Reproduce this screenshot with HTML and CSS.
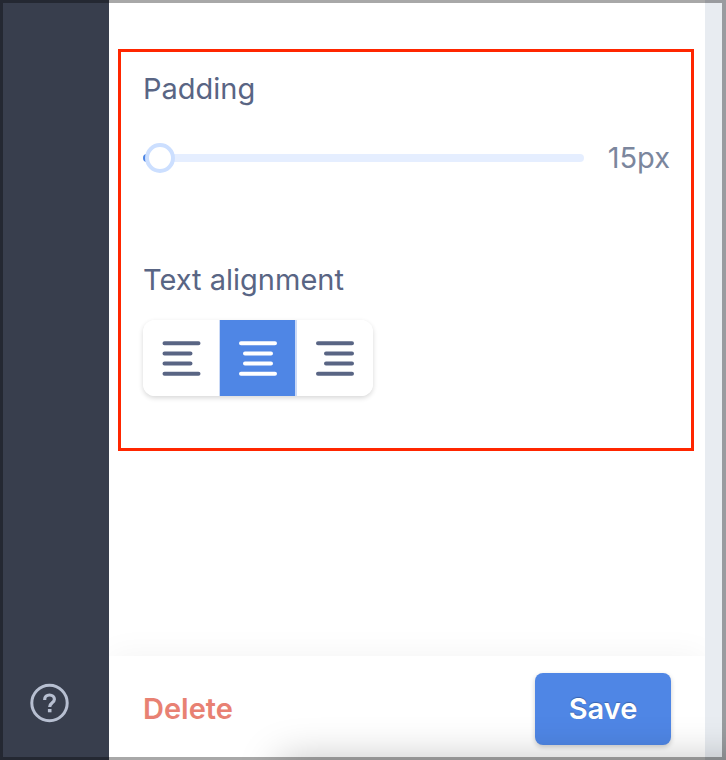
FILE: index.html
```html
<!DOCTYPE html>
<html lang="en">
<head>
<meta charset="utf-8">
<title>Block settings</title>
<link rel="stylesheet" href="styles.css">
</head>
<body>
<div class="app">
  <nav class="sidebar">
    <button class="help" type="button" aria-label="Help">
      <svg width="40" height="40" viewBox="0 0 40 40" fill="none" stroke="currentColor">
        <circle cx="20.500" cy="20" r="17.7" stroke-width="3"/>
        <path d="M15.700 17v-.6c0-2.700 2-4.400 4.800-4.400s4.900 1.700 4.900 4.200c0 1.900-1.100 2.800-2.500 3.900-1.500 1.100-2.200 1.900-2.200 3.900" stroke-width="3.200"/>
        <path d="M18.900 26h3.600v3.300h-3.600z" fill="currentColor" stroke="none"/>
      </svg>
    </button>
  </nav>
  <main class="panel">
    <form class="settings" id="settings">
      <section class="field">
        <label class="label" for="padding">Padding</label>
        <div class="slider-row">
          <input class="slider" id="padding" type="range" min="10" max="1000" value="15">
          <output class="value" for="padding">15px</output>
        </div>
      </section>
      <section class="field">
        <span class="label" id="align-label">Text alignment</span>
        <div class="segmented" role="group" aria-labelledby="align-label">
          <button class="segment" type="button" aria-label="Left" aria-pressed="false">
            <svg width="40" height="40" viewBox="0 0 40 40"><path d="M3.500 5.200h34M3.500 15.400h26M3.500 25.600h26M3.500 35.800h34"/></svg>
          </button>
          <button class="segment active" type="button" aria-label="Center" aria-pressed="true">
            <svg width="40" height="40" viewBox="0 0 40 40"><path d="M3 5.200h34M7 15.400h26M7 25.600h26M3 35.800h34"/></svg>
          </button>
          <button class="segment" type="button" aria-label="Right" aria-pressed="false">
            <svg width="40" height="40" viewBox="0 0 40 40"><path d="M3 5.200h34M11 15.400h26M11 25.600h26M3 35.800h34"/></svg>
          </button>
        </div>
      </section>
    </form>
    <footer class="actions">
      <button class="delete" type="button">Delete</button>
      <button class="save" type="submit" form="settings">Save</button>
    </footer>
  </main>
  <div class="canvas"></div>
  <div class="window-shadow"></div>
  <div class="frame"></div>
</div>
</body>
</html>
```

FILE: styles.css
```css
* {
  box-sizing: border-box;
}

body {
  margin: 0;
  font-family: Inter, "Liberation Sans", sans-serif;
  font-size: 29px;
  line-height: 36px;
  color: #596584;
}

button {
  margin: 0;
  padding: 0;
  border: 0;
  background: none;
  font: inherit;
}

svg {
  display: block;
}

.app {
  position: relative;
  display: flex;
  min-height: 100vh;
  overflow: hidden;
}

.sidebar {
  position: relative;
  z-index: 1;
  flex: 0 0 109px;
  display: flex;
  flex-direction: column;
  justify-content: flex-end;
  padding: 0 29px 37px;
  background: #383e4d;
}

.help {
  color: #b7bfd1;
}

.panel {
  flex: 1;
  min-width: 0;
  display: flex;
  flex-direction: column;
  justify-content: space-between;
  background: #fff;
}

.canvas {
  position: relative;
  flex: 0 0 21px;
  background: #e8ecf1;
}

.settings {
  display: flex;
  flex-direction: column;
  gap: 86px;
  margin: 49px 11px 0 9px;
  padding: 19px 21px 52px 22px;
  border: 3px solid #ff2600;
}

.field {
  display: flex;
  flex-direction: column;
  gap: 22px;
}

.label {
  display: block;
}

.slider-row {
  display: flex;
  align-items: center;
  gap: 24px;
  padding-top: 11px;
}

.slider {
  flex: 1;
  min-width: 0;
  height: 30px;
  margin: 0;
  appearance: none;
  background: none;
}

.slider::-webkit-slider-runnable-track {
  height: 8px;
  border-radius: 4px;
  background: linear-gradient(to right, #4e86e4 12px, #e5eeff 12px);
}

.slider::-webkit-slider-thumb {
  appearance: none;
  width: 30px;
  height: 30px;
  margin-top: -11px;
  border: 4px solid #ccdfff;
  border-radius: 50%;
  background: #fff;
}

.value {
  color: #7b869d;
}

.segmented {
  align-self: flex-start;
  display: flex;
  overflow: hidden;
  border-radius: 12px;
  box-shadow: 0 2px 5px rgba(0, 0, 0, 0.16);
}

.segment {
  display: flex;
  align-items: center;
  justify-content: center;
  width: 76px;
  height: 76px;
  background: #fff;
}

.segment path {
  fill: none;
  stroke: #596584;
  stroke-width: 4;
  stroke-linecap: round;
}

.segment.active {
  width: 78px;
  border: solid #cbdaf6;
  border-width: 0 2px 0 1px;
  background: #4f86e5;
}

.segment.active path {
  stroke: #fff;
}

.actions {
  display: flex;
  align-items: center;
  justify-content: space-between;
  padding: 17px 34px 15px;
  background: #fff;
  box-shadow: 0 0 32px rgba(0, 0, 0, 0.05);
  font-weight: 600;
}

.delete {
  color: #e88173;
}

.save {
  width: 136px;
  height: 72px;
  border-radius: 8px;
  background: #4f86e5;
  box-shadow: 0 2px 5px rgba(0, 0, 0, 0.2);
  color: #fff;
  text-shadow: 0 -1px 1px rgba(0, 0, 0, 0.25);
}

.window-shadow {
  position: absolute;
  top: 100%;
  left: 280px;
  right: -80px;
  height: 80px;
  box-shadow: 0 0 40px rgba(0, 0, 0, 0.25);
  pointer-events: none;
}

.frame {
  position: absolute;
  z-index: 2;
  inset: 0;
  border: 3px solid rgba(0, 0, 0, 0.34);
  border-right-width: 4px;
  pointer-events: none;
}
```
